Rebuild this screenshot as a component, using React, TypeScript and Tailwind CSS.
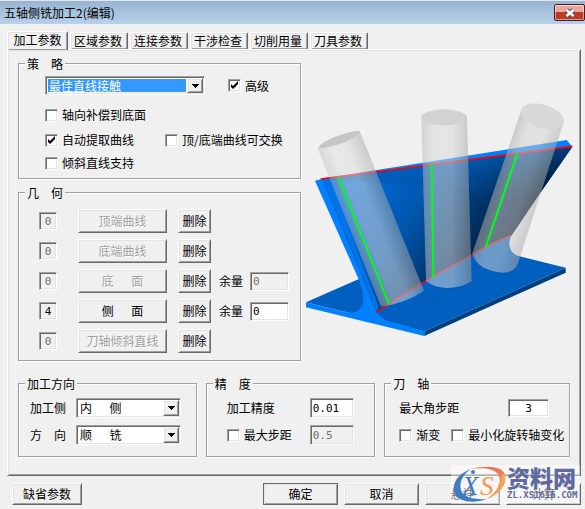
import type { ReactNode } from "react";

const sunken =
  "border border-t-[#a0a0a0] border-l-[#a0a0a0] border-b-white border-r-white shadow-[inset_1px_1px_0_#696969,inset_-1px_-1px_0_#e3e3e3]";
const raised =
  "border border-t-white border-l-white border-b-[#696969] border-r-[#696969] shadow-[inset_1px_1px_0_#e3e3e3,inset_-1px_-1px_0_#a0a0a0]";
const digits = "font-['DejaVu_Sans_Mono',monospace] text-[11px]";

function Group({ title, className, children }: { title: string; className: string; children: ReactNode }) {
  return (
    <fieldset className="min-w-0 border border-[#a0a0a0] shadow-[1px_1px_0_#fff,inset_1px_1px_0_#fff]">
      <legend className="ml-1.5 bg-[#f0f0f0] px-0.5 leading-[13px] whitespace-pre">{title}</legend>
      <div className={className}>{children}</div>
    </fieldset>
  );
}

function Check({ label, checked = false }: { label: string; checked?: boolean }) {
  return (
    <label className="flex h-[18px] items-center gap-1 whitespace-nowrap">
      <span className="grid size-[13px] shrink-0">
        <input
          type="checkbox"
          defaultChecked={checked}
          className={`peer col-start-1 row-start-1 size-[13px] appearance-none bg-white ${sunken}`}
        />
        <svg
          viewBox="0 0 13 13"
          className="pointer-events-none invisible col-start-1 row-start-1 size-[13px] peer-checked:visible"
        >
          <path d="M3 5v3l2 2 5-5V2L5 7z" fill="#000" />
        </svg>
      </span>
      {label}
    </label>
  );
}

function Dropdown({
  id,
  label,
  value,
  active = false,
  className,
}: {
  id: string;
  label?: string;
  value: string;
  active?: boolean;
  className: string;
}) {
  return (
    <span className={`grid grid-cols-[1fr_16px] bg-white p-px ${sunken} ${className}`}>
      <span className={`col-start-1 row-start-1 m-px ${active ? "bg-[#3399ff]" : "bg-white"}`} />
      <select
        id={id}
        aria-label={label}
        className={`col-span-2 col-start-1 row-start-1 h-full min-w-0 appearance-none bg-transparent pl-0.5 leading-[14px] outline-none ${active ? "text-white" : "text-black"}`}
      >
        <option>{value}</option>
      </select>
      <span
        className={`pointer-events-none col-start-2 row-start-1 grid place-items-center bg-[#f0f0f0] ${raised}`}
      >
        <svg viewBox="0 0 7 4" className="h-1 w-[7px]" shapeRendering="crispEdges">
          <path d="M0 0h7L3.500 4z" fill="#000" />
        </svg>
      </span>
    </span>
  );
}

function Button({
  children,
  className,
  disabled = false,
}: {
  children: ReactNode;
  className: string;
  disabled?: boolean;
}) {
  return (
    <button
      type="button"
      disabled={disabled}
      className={`shrink-0 bg-[#f0f0f0] whitespace-pre disabled:text-[#a0a0a0] disabled:[text-shadow:1px_1px_0_#fff] ${raised} ${className}`}
    >
      {children}
    </button>
  );
}

const tabs = ["加工参数", "区域参数", "连接参数", "干涉检查", "切削用量", "刀具参数"];

const geometry = [
  { name: "顶端曲线", count: "0", enabled: false },
  { name: "底端曲线", count: "0", enabled: false },
  { name: "底　\u00a0\u00a0面", count: "0", enabled: false, margin: true },
  { name: "侧　\u00a0\u00a0面", count: "4", enabled: true, margin: true },
  { name: "刀轴倾斜直线", count: "0", enabled: false },
];

function Illustration() {
  return (
    <svg viewBox="3 0 828 765" className="h-[255px] w-[276px]" role="img" aria-label="侧铣示意图">
      <defs>
        <linearGradient id="wall" gradientUnits="userSpaceOnUse" x1="200" y1="220" x2="600" y2="470">
          <stop offset="0" stopColor="#006cd9" />
          <stop offset="0.4" stopColor="#0058b0" />
          <stop offset="0.7" stopColor="#003a74" />
          <stop offset="1" stopColor="#001833" />
        </linearGradient>
        <linearGradient id="wallTop" gradientUnits="userSpaceOnUse" x1="600" y1="180" x2="640" y2="340">
          <stop offset="0" stopColor="#005cb8" stopOpacity="0.85" />
          <stop offset="1" stopColor="#003a78" stopOpacity="0" />
        </linearGradient>
        <linearGradient id="tool1" gradientUnits="userSpaceOnUse" x1="140" y1="410" x2="280" y2="354">
          <stop offset="0" stopColor="#b4b4b4" stopOpacity="0.4" />
          <stop offset="0.3" stopColor="#e0e0e0" stopOpacity="0.5" />
          <stop offset="0.6" stopColor="#dcdcdc" stopOpacity="0.52" />
          <stop offset="1" stopColor="#a0a0a0" stopOpacity="0.5" />
        </linearGradient>
        <linearGradient id="tool2" x1="0" y1="0" x2="1" y2="0">
          <stop offset="0" stopColor="#b4b4b4" stopOpacity="0.5" />
          <stop offset="0.25" stopColor="#d8d8d8" stopOpacity="0.52" />
          <stop offset="0.6" stopColor="#dadada" stopOpacity="0.52" />
          <stop offset="1" stopColor="#9c9c9c" stopOpacity="0.54" />
        </linearGradient>
        <linearGradient id="tool3" gradientUnits="userSpaceOnUse" x1="590" y1="280" x2="716" y2="322">
          <stop offset="0" stopColor="#acacac" stopOpacity="0.54" />
          <stop offset="0.25" stopColor="#d0d0d0" stopOpacity="0.52" />
          <stop offset="0.65" stopColor="#d4d4d4" stopOpacity="0.5" />
          <stop offset="1" stopColor="#acacac" stopOpacity="0.52" />
        </linearGradient>
      </defs>
      <path d="M18 637L170 570L400 480L655 498L797 533L373 724Z" fill="#005fbf" />
      <path d="M18 637L373 724V738L18 652Z" fill="#0080ff" />
      <path d="M373 724L797 533V548L373 738Z" fill="#003f80" />
      <path
        d="M68 266L817 170L720 310L640 425Q618 462 636 485Q646 498 662 500L560 552L265 693Q240 685 228 660Z"
        fill="#005fbf"
      />
      <path d="M68 266L817 170L720 310L636 435Q570 465 515 495L365 580L228 667Z" fill="url(#wall)" />
      <path d="M68 266L817 170L720 310L636 435L515 300Z" fill="url(#wallTop)" />
      <path d="M64 266L800 150L817 170Z" fill="#0080ff" />
      <path d="M265 693L560 540L640 500" fill="none" stroke="#0052a6" strokeWidth="2" />
      <path
        d="M45 272L68 266L222 645Q232 678 262 692L373 724L300 716L140 668Q192 672 190 620Q186 592 176 568Z"
        fill="#0080ff"
      />
      <path d="M68 266L88 262L236 652L228 667L222 645Z" fill="#0074e8" />
      <path d="M68 266L222 645Q232 678 262 692" fill="none" stroke="#0058b0" strokeWidth="2" />
      <path d="M62 267L817 169" stroke="#f00" strokeWidth="5" />
      <path d="M228 667L365 580L515 495Q570 462 636 435" fill="none" stroke="#f00" strokeWidth="4" />
      <path d="M53 176Q105 160 180 125L372 602Q315 640 243 650Z" fill="url(#tool1)" />
      <path d="M364 84Q432 58 501 84L515 574Q485 594 440 594Q400 592 378 574Z" fill="url(#tool2)" />
      <path d="M664 60Q727 66 790 100L654 520Q646 548 605 548Q530 540 517 490Z" fill="url(#tool3)" />
      <path d="M53 175Q60 158 110 139Q165 119 180 124Q176 140 130 158Q80 175 53 175Z" fill="#c6c6c6" />
      <ellipse cx="432" cy="82" rx="69" ry="24" fill="#d2d2d2" />
      <ellipse cx="727" cy="79" rx="67" ry="35" transform="rotate(17 727 79)" fill="#d8d8d8" />
      <path d="M115 262L267 642M395 222L400 563M652 190L557 472" stroke="#00ff10" strokeWidth="6" />
    </svg>
  );
}

function Watermark() {
  return (
    <div
      aria-hidden="true"
      className="pointer-events-none absolute right-[5px] bottom-[5px] flex h-[39px] w-[129px] items-center bg-white/45"
    >
      <svg viewBox="0 0 56 39" className="h-[39px] w-14 shrink-0">
        <path d="M20 4C6 9 0 20 4 29C8 37 22 39 36 34C23 35 12 32 10 25C8 18 11 10 20 4Z" fill="#3f7cc0" />
        <path d="M20 4C35 0 52 1 54 10C56 20 48 29 36 34C46 27 51 18 48 11C45 4 34 2 20 4Z" fill="#ec7a5a" />
        <path d="M54 9C56 20 48 29 36 34C46 27 51 18 50 10Z" fill="#f5a555" />
        <circle cx="22" cy="7" r="2" fill="#3f7cc0" />
        <text x="11" y="30" fontFamily="Liberation Serif, serif" fontSize="27" fontStyle="italic" fill="#3f7cc0">
          X
        </text>
        <text x="29" y="30" fontFamily="Liberation Serif, serif" fontSize="27" fontStyle="italic" fill="#f39a52">
          S
        </text>
      </svg>
      <div className="flex flex-col items-start pb-1 text-[#606aa0]">
        <span className="text-[23px] leading-[25px] font-black whitespace-nowrap">资料网</span>
        <span className="font-['DejaVu_Sans_Mono',monospace] text-[9px] leading-[10px] font-bold">
          ZL.XS1616.COM
        </span>
      </div>
    </div>
  );
}

export default function App() {
  return (
    <div className="relative flex min-h-screen w-full flex-col bg-[#f0f0f0] font-['Noto_Sans_CJK_SC',sans-serif] text-[12px] leading-[14px] text-black">
      <header className="flex h-6 items-center justify-between border-t border-[#dfe8f2] bg-linear-to-b from-[#98b4d0] to-[#b9d1ea] pl-1">
        <h1>五轴侧铣加工2(编辑)</h1>
        <button
          type="button"
          aria-label="关闭"
          className="grid h-[17px] w-[31px] place-items-center rounded-xs border border-[#4c1a20] bg-linear-to-b from-[#e8a89c] from-45% to-[#bc3d25] to-50% shadow-[inset_0_0_0_1px_#ffffff80]"
        >
          <svg viewBox="0 0 12 10" className="h-2.5 w-3">
            <path d="M2.500 2L9.500 8M9.500 2L2.500 8" stroke="#4d5468" strokeWidth="4.500" />
            <path d="M2.500 2L9.500 8M9.500 2L2.500 8" stroke="#fff" strokeWidth="2.500" />
          </svg>
        </button>
      </header>

      <main className="pt-[7px] pr-1 pl-[7px]">
        <div role="tablist" className="flex items-end gap-0.5">
          {tabs.map((tab, i) => (
            <button
              key={tab}
              type="button"
              role="tab"
              aria-selected={i === 0}
              className={
                i === 0
                  ? `relative -mb-px h-[19px] w-[61px] rounded-t-xs border-b-0 bg-[#f0f0f0] pb-0.5 ${raised} shadow-[inset_-1px_0_0_#a0a0a0]`
                  : `h-[17px] w-[58px] rounded-t-xs border-b-0 bg-[#f0f0f0] pr-0.5 ${raised} shadow-[inset_-1px_0_0_#a0a0a0]`
              }
            >
              {tab}
            </button>
          ))}
        </div>

        <section role="tabpanel" className={`pt-[7px] pb-[18px] pl-2.5 ${raised}`}>
          <div className="flex">
            <div className="flex w-[283px] shrink-0 flex-col gap-[7px]">
              <Group title="策　略" className="pt-1.5 pb-1.5 pl-[26px]">
                <div className="flex items-center gap-[23px]">
                  <Dropdown id="strategy" label="策略" value="最佳直线接触" active className="h-[19px] w-40" />
                  <Check label="高级" checked />
                </div>
                <div className="mt-[11px]">
                  <Check label="轴向补偿到底面" />
                </div>
                <div className="mt-[7px] grid grid-cols-[120px_auto]">
                  <Check label="自动提取曲线" checked />
                  <Check label="顶/底端曲线可交换" />
                </div>
                <div className="mt-[5px]">
                  <Check label="倾斜直线支持" />
                </div>
              </Group>

              <Group title="几　何" className="pt-2.5 pb-[7px] pl-5">
                <div className="flex flex-col gap-1.5">
                  {geometry.map((row) => (
                    <div key={row.name} className="flex h-6 items-center">
                      <input
                        aria-label={`${row.name}数量`}
                        defaultValue={row.count}
                        disabled={!row.enabled}
                        readOnly
                        className={`mr-[21px] size-[18px] shrink-0 bg-[#f0f0f0] text-center disabled:text-[#6d6d6d] ${sunken} ${digits}`}
                      />
                      <Button className="mr-[11px] h-6 w-[89px]" disabled={!row.enabled}>
                        {row.name}
                      </Button>
                      <Button className="mr-2 h-6 w-[33px]">删除</Button>
                      {row.margin && (
                        <label className="flex items-center gap-[7px] whitespace-nowrap">
                          余量
                          <input
                            defaultValue="0"
                            disabled={!row.enabled}
                            className={`h-[19px] w-[39px] bg-white pl-0.5 disabled:bg-[#f0f0f0] disabled:text-[#6d6d6d] ${sunken} ${digits}`}
                          />
                        </label>
                      )}
                    </div>
                  ))}
                </div>
              </Group>
            </div>
            <div className="flex min-w-0 flex-1 flex-col justify-end pb-4">
              <Illustration />
            </div>
          </div>

          <div className="mt-4 grid grid-cols-[179fr_170fr_186fr] gap-[9px] pr-2.5">
            <Group title="加工方向" className="pt-2 pb-[11px] pl-[11px]">
              <div className="grid grid-cols-[46px_105px] items-center gap-y-[7px]">
                <label htmlFor="side">加工侧</label>
                <Dropdown id="side" value={"内　\u00a0\u00a0侧"} className="h-5" />
                <label htmlFor="direction">方　向</label>
                <Dropdown id="direction" value={"顺　\u00a0\u00a0铣"} className="h-5" />
              </div>
            </Group>
            <Group title="精　度" className="pt-2 pb-[11px] pl-5">
              <div className="grid grid-cols-[83px_44px] items-center gap-y-[7px]">
                <label htmlFor="precision">加工精度</label>
                <input id="precision" defaultValue="0.01" className={`h-5 bg-white pl-0.5 ${sunken} ${digits}`} />
                <Check label="最大步距" />
                <input
                  aria-label="最大步距值"
                  defaultValue="0.5"
                  disabled
                  className={`h-5 bg-[#f0f0f0] pl-0.5 text-[#6d6d6d] ${sunken} ${digits}`}
                />
              </div>
            </Group>
            <Group title="刀　轴" className="pt-2 pb-[11px] pl-3.5">
              <div className="flex flex-col gap-[7px]">
                <div className="flex h-5 items-center justify-between pr-5">
                  <label htmlFor="angle">最大角步距</label>
                  <input
                    id="angle"
                    defaultValue="3"
                    className={`h-[18px] w-[41px] bg-white text-center ${sunken} ${digits}`}
                  />
                </div>
                <div className="flex h-5 items-center gap-[11px]">
                  <Check label="渐变" />
                  <Check label="最小化旋转轴变化" />
                </div>
              </div>
            </Group>
          </div>
        </section>
      </main>

      <footer className="flex justify-between pt-[7px] pr-1 pl-3">
        <Button className="h-[22px] w-[70px]">缺省参数</Button>
        <div className="flex gap-1.5">
          <Button className="h-[22px] w-[75px] outline outline-[#696969] -outline-offset-1">确定</Button>
          <Button className="h-[22px] w-[75px]">取消</Button>
          <Button className="h-[22px] w-[75px]">悬挂</Button>
          <Button className="h-[22px] w-[75px]">计算</Button>
        </div>
      </footer>
      <Watermark />
    </div>
  );
}
